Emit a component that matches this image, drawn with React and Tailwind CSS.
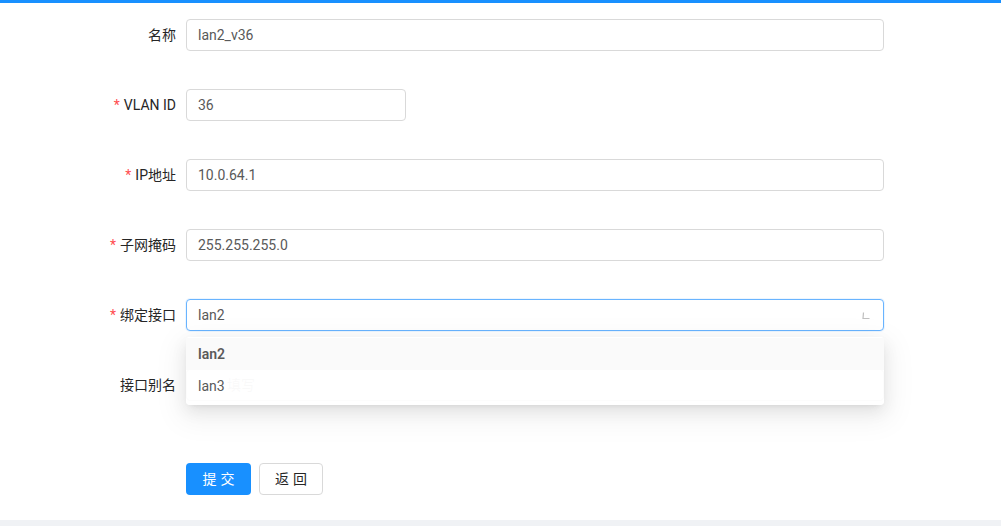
import React from 'react';

const font = { fontFamily: 'Roboto, "Noto Sans CJK SC", sans-serif' };

const Label = ({ required, children }) => (
    <div className="w-[176px] shrink-0 flex items-center justify-end text-[14px] text-[#262626]">
        {required && <span className="text-[#ff4d4f] mr-[4px] text-[14px] leading-none">*</span>}
        <span>{children}</span>
    </div>
);

const Input = ({ value, placeholder, className = 'w-[698px]', padClass = 'px-[11px]' }) => (
    <div
        className={`${className} ${padClass} h-[32px] ml-[10px] flex items-center border border-[#d9d9d9] rounded-[4px] bg-white text-[14px] ${value ? 'text-[#595959]' : 'text-[#bfbfbf]'}`}
    >
        {value || placeholder}
    </div>
);

const App = () => {
    return (
        <div className="w-[1001px] h-[526px] bg-white flex flex-col overflow-hidden" style={font}>
            <div className="h-[3px] bg-[#1890ff] shrink-0" />

            <div className="flex flex-col pt-[16px]">
                {/* 名称 */}
                <div className="flex h-[32px]">
                    <Label>名称</Label>
                    <Input value="lan2_v36" />
                </div>

                <div className="flex h-[32px] mt-[38px]">
                    <Label required>VLAN ID</Label>
                    <Input value="36" className="w-[220px]" />
                </div>

                <div className="flex h-[32px] mt-[38px]">
                    <Label required>IP地址</Label>
                    <Input value="10.0.64.1" />
                </div>

                <div className="flex h-[32px] mt-[38px]">
                    <Label required>子网掩码</Label>
                    <Input value="255.255.255.0" />
                </div>

                {/* 绑定接口 select, open */}
                <div className="flex h-[32px] mt-[38px] relative z-10">
                    <Label required>绑定接口</Label>
                    <div className="relative ml-[10px] w-[698px]">
                        <div className="h-[32px] px-[11px] flex items-center justify-between border border-[#69b4ff] rounded-[4px] bg-white text-[14px] text-[#595959] shadow-[0_0_0_1px_rgba(24,144,255,0.08)]">
                            <span>lan2</span>
                            <svg width="10" height="10" viewBox="0 0 10 10" className="mr-[1px] mt-[1px]">
                                <path d="M2.5 1.5 L2 7.5 L8.5 7.5" fill="none" stroke="#bfbfbf" strokeWidth="1.2" />
                            </svg>
                        </div>
                        {/* dropdown, still fading in */}
                        <div className="absolute left-0 top-[38px] w-full bg-white/[0.78] rounded-[4px] pt-[1px] pb-[3px] text-[14px] shadow-[0_3px_6px_-4px_rgba(0,0,0,0.12),0_6px_16px_0_rgba(0,0,0,0.08),0_9px_28px_8px_rgba(0,0,0,0.05)]">
                            <div className="h-[32px] px-[12px] flex items-center bg-[#fafafa] font-semibold text-[#595959]">lan2</div>
                            <div className="h-[32px] px-[12px] flex items-center text-[#595959] bg-white/60">lan3</div>
                        </div>
                    </div>
                </div>

                <div className="flex h-[32px] mt-[38px]">
                    <Label>接口别名</Label>
                    <Input placeholder="填写" padClass="pl-[40px] pr-[11px]" />
                </div>

                <div className="flex h-[32px] mt-[62px] pl-[186px] gap-[8px]">
                    <button className="w-[65px] h-[32px] rounded-[4px] bg-[#1890ff] text-white text-[14px] tracking-[4px] pl-[4px]">
                        提交
                    </button>
                    <button className="w-[64px] h-[32px] rounded-[4px] border border-[#d9d9d9] bg-white text-[#262626] text-[14px] tracking-[4px] pl-[4px]">
                        返回
                    </button>
                </div>
            </div>

            <div className="mt-auto h-[6px] bg-[#f0f2f5] shrink-0" />
        </div>
    );
};

export default App;
